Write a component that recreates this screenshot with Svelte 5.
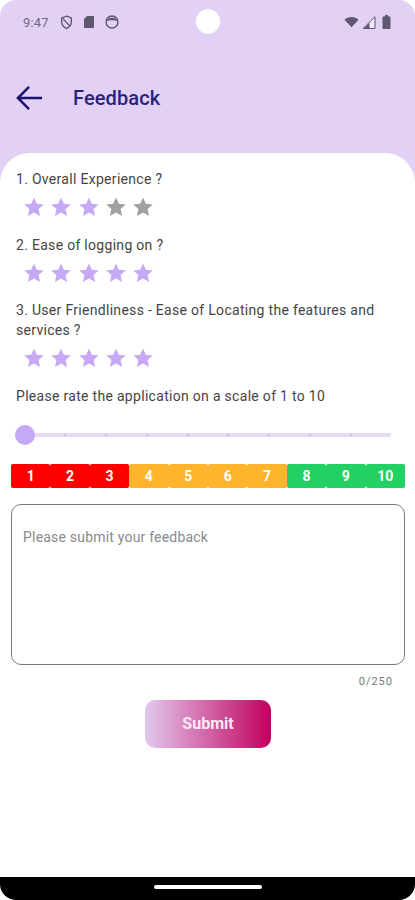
<script>
  const questions = [
    { lines: '1. Overall Experience ?', rating: 3 },
    { lines: '2. Ease of logging on ?', rating: 5 },
    { lines: '3. User Friendliness - Ease of Locating the features and services ?', rating: 5 }
  ];
  const scale = [
    { n: 1, c: 'red' }, { n: 2, c: 'red' }, { n: 3, c: 'red' },
    { n: 4, c: 'amber' }, { n: 5, c: 'amber' }, { n: 6, c: 'amber' }, { n: 7, c: 'amber' },
    { n: 8, c: 'green' }, { n: 9, c: 'green' }, { n: 10, c: 'green' }
  ];
  const starPath = 'M12 1.6l3.1 6.9 7.5.8-5.6 5 1.6 7.4L12 18l-6.6 3.7L7 14.3l-5.6-5 7.5-.8z';
</script>

<div class="screen">
  <header class="top">
    <div class="status">
      <div class="status-left">
        <span class="time">9:47</span>
        <svg class="ic shield" viewBox="0 0 14 16"><path d="M7 1.2l5.2 1.9v4.2c0 3.3-2.2 5.9-5.2 7.2-3-1.3-5.2-3.9-5.2-7.2V3.1z" fill="none" stroke="#5f5670" stroke-width="1.5"/><path d="M3 3.5l8 9" stroke="#5f5670" stroke-width="1.4"/></svg>
        <svg class="ic sim" viewBox="0 0 12 14"><path d="M4 1h6.2c.5 0 .8.3.8.8v10.4c0 .5-.3.8-.8.8H1.8c-.5 0-.8-.3-.8-.8V4z" fill="#5f5670"/></svg>
        <svg class="ic face" viewBox="0 0 16 16"><circle cx="8" cy="8" r="6" fill="none" stroke="#5f5670" stroke-width="1.4"/><path d="M2.5 7C3.5 2.500 12.500 2.500 13.500 7c-2-1-9-1-11 0z" fill="#5f5670"/></svg>
      </div>
      <div class="camera"></div>
      <div class="status-right">
        <svg class="ic wifi" viewBox="0 0 16 12"><path d="M.5 3.500C4.500-.4 11.500-.4 15.500 3.500L8 11.500z" fill="#5f5670"/></svg>
        <svg class="ic signal" viewBox="0 0 14 13"><path d="M13 .8V12.500H1z" fill="#f3edf9" stroke="#5f5670" stroke-width="1"/><path d="M7.500 7V12.500H1.500z" fill="#5f5670"/></svg>
        <svg class="ic battery" viewBox="0 0 9 14"><path d="M3 0h3v1.500h1.500c.5 0 1 .4 1 1V13c0 .6-.5 1-1 1h-6c-.5 0-1-.4-1-1V2.500c0-.6.5-1 1-1H3z" fill="#5f5670"/></svg>
      </div>
    </div>
    <div class="bar">
      <svg class="back" viewBox="0 0 28 26"><path d="M27 13H2M13.500 1.500L2 13l11.500 11.500" fill="none" stroke="#1c1070" stroke-width="2.600"/></svg>
      <h1>Feedback</h1>
    </div>
  </header>

  <main class="sheet">
    {#each questions as q}
      <section class="q">
        <p class="label">{q.lines}</p>
        <div class="stars">
          {#each [1, 2, 3, 4, 5] as i}
            <svg class="star" viewBox="0 0 24 24"><path d={starPath} class:on={i <= q.rating} /></svg>
          {/each}
        </div>
      </section>
    {/each}

    <p class="label rate">Please rate the application on a scale of 1 to 10</p>

    <div class="slider">
      <div class="track">
        {#each Array(8) as _}
          <i class="tick"></i>
        {/each}
      </div>
      <div class="thumb"></div>
    </div>

    <div class="scale">
      {#each scale as s}
        <span class="cell {s.c}">{s.n}</span>
      {/each}
    </div>

    <div class="box">Please submit your feedback</div>
    <div class="count">0/250</div>

    <button class="submit">Submit</button>
  </main>

  <footer class="nav"><span class="pill"></span></footer>
</div>

<style>
  :global(body) {
    margin: 0;
    background: #fff;
  }
  .screen {
    width: 415px;
    height: 900px;
    display: flex;
    flex-direction: column;
    position: relative;
    overflow: hidden;
    background: #fff;
    font-family: Roboto, "Noto Sans", sans-serif;
  }
  .top {
    height: 184px;
    flex: none;
    background: #e2d1f5;
    border-radius: 16px 16px 0 0;
    display: flex;
    flex-direction: column;
  }
  .status {
    height: 44px;
    padding: 0 23px;
    display: flex;
    align-items: center;
    justify-content: space-between;
    position: relative;
  }
  .status-left, .status-right {
    display: flex;
    align-items: center;
  }
  .time {
    font-size: 13px;
    color: #6f6682;
    margin-right: 11px;
    letter-spacing: 0.2px;
  }
  .ic { display: block; }
  .shield { width: 13px; height: 15px; margin-right: 10px; }
  .sim { width: 12px; height: 14px; margin-right: 9px; }
  .face { width: 16px; height: 16px; }
  .wifi { width: 15px; height: 12px; margin-right: 3px; }
  .signal { width: 14px; height: 13px; margin-right: 6px; }
  .battery { width: 9px; height: 14px; margin-right: 1px; }
  .camera {
    position: absolute;
    left: 196px;
    top: 9px;
    width: 24px;
    height: 25px;
    border-radius: 50%;
    background: #fff;
  }
  .bar {
    margin-top: 9px;
    height: 90px;
    padding-left: 16px;
    display: flex;
    align-items: center;
    box-sizing: border-box;
  }
  .back { width: 27px; height: 26px; flex: none; }
  h1 {
    margin: 0 0 0 30px;
    font-size: 20px;
    font-weight: 500;
    color: #2a1f7c;
    letter-spacing: 0.1px;
  }
  .sheet {
    flex: 1;
    margin-top: -31px;
    background: #fff;
    border-radius: 30px 30px 0 0;
    padding: 16px 0 0;
    display: flex;
    flex-direction: column;
    position: relative;
  }
  .q { padding: 0 16px; margin-bottom: 16.500px; }
  .label {
    margin: 0;
    font-size: 14px;
    line-height: 20px;
    color: #454545;
    letter-spacing: 0.3px;
  }
  .stars {
    display: flex;
    padding: 7px 0 0 7px;
    gap: 5.300px;
  }
  .star { width: 22px; height: 22px; display: block; }
  .star path { fill: #a0a0a0; }
  .star path.on { fill: #c6a9f5; }
  .rate { padding: 0 16px; }
  .slider {
    height: 22px;
    margin: 18px 24px 0 14px;
    position: relative;
    display: flex;
    align-items: center;
  }
  .track {
    flex: 1;
    height: 4px;
    margin-left: 11px;
    border-radius: 2px;
    background: #e6daf5;
    display: flex;
    justify-content: space-evenly;
    align-items: center;
  }
  .tick {
    width: 2px;
    height: 2px;
    background: #c6b3e6;
    border-radius: 50%;
  }
  .thumb {
    position: absolute;
    left: 1px;
    top: 1px;
    width: 20px;
    height: 20px;
    border-radius: 50%;
    background: #c6a9f5;
  }
  .scale {
    display: grid;
    grid-template-columns: repeat(10, 1fr);
    margin: 18px 10px 0 11px;
    height: 24px;
  }
  .cell {
    display: flex;
    align-items: center;
    justify-content: center;
    color: #fff;
    font-size: 14px;
    font-weight: 700;
    border-radius: 2px;
  }
  .red { background: #ff0000; }
  .amber { background: #ffb42e; }
  .green { background: #22d163; }
  .box {
    margin: 16px 10px 0 11px;
    height: 161px;
    box-sizing: border-box;
    border: 1.200px solid #7c7c7c;
    border-radius: 10px;
    padding: 23px 11px 0;
    font-size: 14px;
    line-height: 18px;
    color: #8a8a8a;
    letter-spacing: 0.2px;
  }
  .count {
    margin: 10px 22px 0 0;
    text-align: right;
    font-size: 11px;
    line-height: 14px;
    color: #777;
    letter-spacing: 1px;
  }
  .submit {
    align-self: flex-start;
    margin: 11px 0 0 145px;
    width: 126px;
    height: 48px;
    border: 0;
    border-radius: 10px;
    background: linear-gradient(90deg, #e2c8ee 0%, #c2005f 100%);
    color: #fbeaf4;
    font: 700 16px Roboto, sans-serif;
  }
  .nav {
    height: 23px;
    flex: none;
    background: #000;
    border-radius: 0 0 16px 16px;
    display: flex;
    justify-content: center;
    padding-top: 8px;
    box-sizing: border-box;
  }
  .pill {
    width: 108px;
    height: 4px;
    background: #fff;
    border-radius: 2px;
  }
</style>
